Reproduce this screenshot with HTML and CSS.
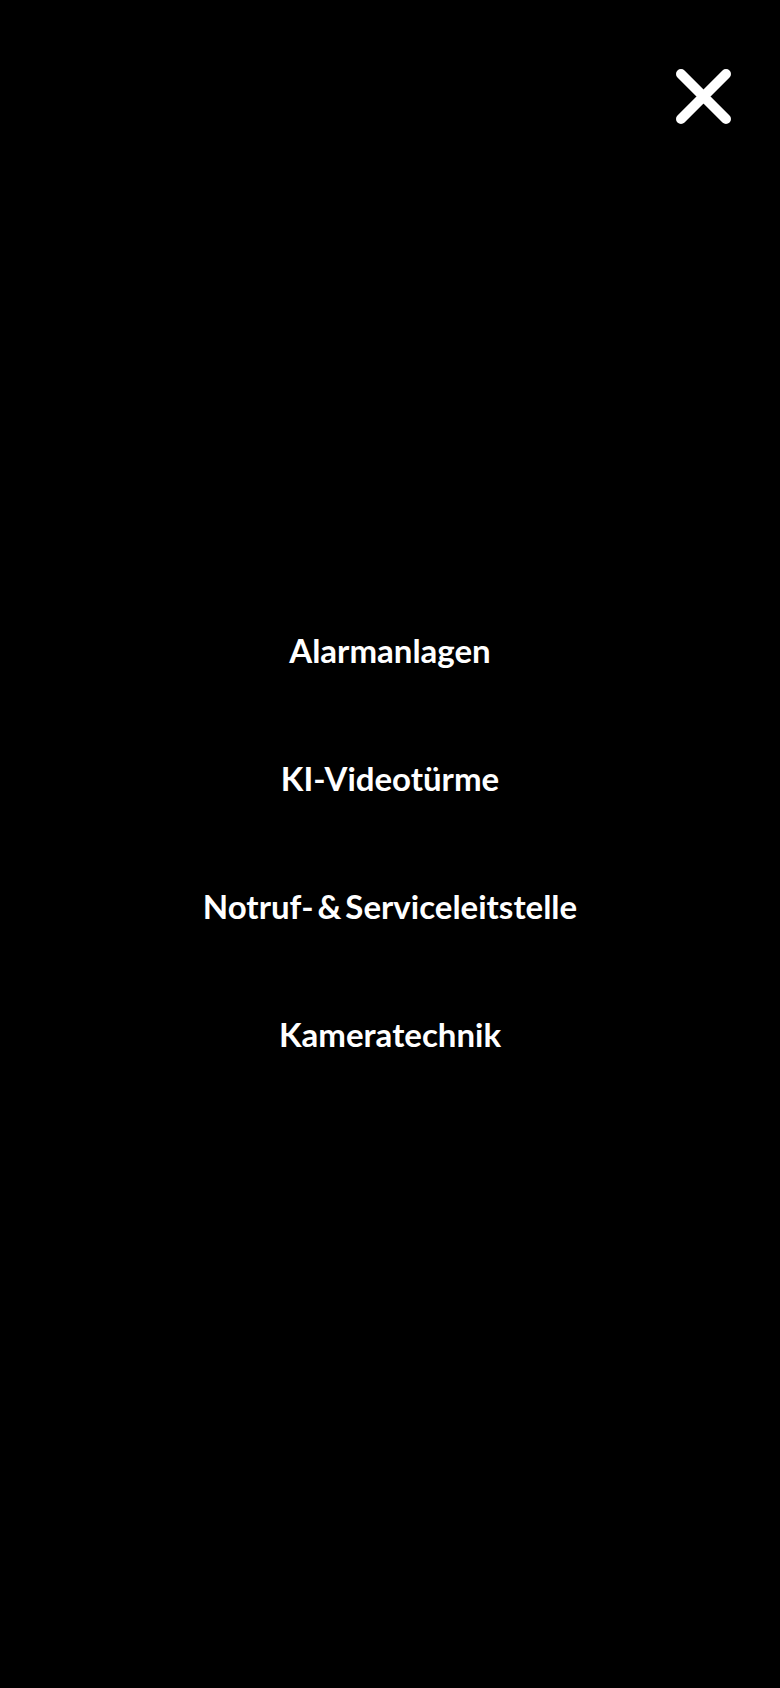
FILE: index.html
```html
<!DOCTYPE html>
<html lang="de">
<head>
<meta charset="utf-8">
<title>Menü</title>
<link rel="stylesheet" href="styles.css">
</head>
<body>
<div class="overlay">
  <button class="close" aria-label="Schließen">
    <svg width="55" height="55" viewBox="0 0 55 55"><path d="M5 5 L50 50 M50 5 L5 50" stroke="#fff" stroke-width="10" stroke-linecap="round" fill="none"/></svg>
  </button>
  <nav class="menu">
    <a href="#" class="item">Alarmanlagen</a>
    <a href="#" class="item">KI-Videotürme</a>
    <a href="#" class="item">Notruf- &amp; Serviceleitstelle</a>
    <a href="#" class="item">Kameratechnik</a>
  </nav>
</div>
</body>
</html>
```
FILE: styles.css
```css
html, body {
  margin: 0;
  padding: 0;
  background: #000;
}
.overlay {
  position: relative;
  min-height: 1688px;
  display: flex;
  align-items: center;
  justify-content: center;
}
.close {
  position: absolute;
  top: 69px;
  right: 49px;
  width: 55px;
  height: 55px;
  padding: 0;
  border: 0;
  background: none;
  cursor: pointer;
}
.close svg { display: block; }
.menu {
  display: flex;
  flex-direction: column;
  align-items: center;
  gap: 80px;
  margin-top: -5px;
}
.item {
  font-family: Lato, "Noto Sans", sans-serif;
  font-weight: 700;
  font-size: 33px;
  line-height: 48px;
  word-spacing: -4px;
  color: #fff;
  text-decoration: none;
}
```
